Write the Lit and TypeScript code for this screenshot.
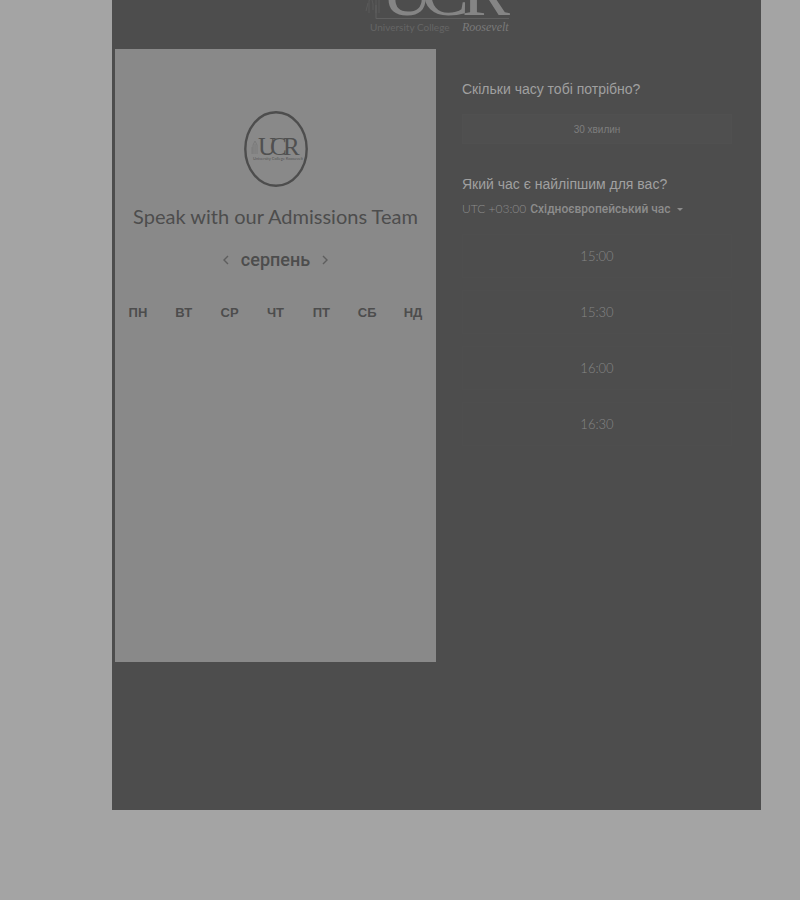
import { LitElement, html, css, svg } from "lit";
import { customElement, state } from "lit/decorators.js";

const DAYS = ["ПН", "ВТ", "СР", "ЧТ", "ПТ", "СБ", "НД"];
const TIMES = ["15:00", "15:30", "16:00", "16:30"];

const tower = svg`<path d="M5 20l2-8M8 22V10l2-5 2 8v6M15 22V0M18 22V8" />`;

@customElement("app-root")
export class AppRoot extends LitElement {
  static styles = css`
    :host {
      display: block;
      min-height: 100vh;
      box-sizing: border-box;
      padding: 0 39px 90px 112px;
      background: #a4a4a4;
      font-family: "Liberation Sans", Arial, sans-serif;
      color: #4d4d4d;
    }
    * {
      box-sizing: border-box;
    }
    button {
      font: inherit;
      color: inherit;
      background: none;
      border: 0;
      padding: 0;
      cursor: pointer;
    }
    .page {
      background: #4d4d4d;
      padding: 0 3px 148px;
    }
    .banner {
      height: 49px;
      overflow: hidden;
      display: flex;
      flex-direction: column;
      justify-content: flex-end;
      align-items: center;
      padding-bottom: 14px;
    }
    .banner svg {
      display: block;
      width: 148px;
      height: 80px;
      flex: none;
      overflow: visible;
    }
    .booking {
      display: grid;
      grid-template-columns: minmax(0, 321fr) minmax(0, 322fr);
    }
    .calendar {
      background: #898989;
      min-height: 613px;
      padding-top: 62px;
      display: flex;
      flex-direction: column;
      align-items: center;
    }
    .badge {
      display: block;
      width: 64px;
      height: 76px;
    }
    h1 {
      margin: 15px 0 0;
      font: 400 20px/28px Lato, sans-serif;
      white-space: nowrap;
    }
    .month {
      display: flex;
      align-items: center;
      gap: 8px;
      margin-top: 16px;
    }
    .month h2 {
      margin: 0;
      font: 500 18px/28px Roboto, sans-serif;
    }
    .month button {
      display: flex;
      padding: 4px;
    }
    .month svg {
      width: 6px;
      height: 10px;
      fill: none;
      stroke: #5e5e5e;
      stroke-width: 1.4;
    }
    .week {
      width: 100%;
      margin-top: 28px;
      border-collapse: collapse;
      table-layout: fixed;
    }
    th {
      padding: 0;
      font-size: 13px;
      line-height: 22px;
      font-weight: 700;
    }
    .options {
      padding: 30px 26px 0;
      color: #a0a0a0;
    }
    .options h3 {
      margin: 0;
      font-size: 14px;
      line-height: 20px;
      font-weight: 400;
    }
    .duration {
      display: block;
      width: 100%;
      height: 30px;
      margin: 15px 0 30px;
      background: #4f4f4f;
      border: 1px solid #505050;
      font-size: 10px;
      color: #7e7e7e;
    }
    .zone {
      display: flex;
      align-items: center;
      gap: 4px;
      margin: 5px 0 15px;
      font-size: 12px;
      line-height: 20px;
      white-space: nowrap;
      color: #8c8c8c;
    }
    .zone .offset {
      font-family: Lato, sans-serif;
      font-weight: 300;
    }
    .zone .name {
      font-family: Roboto, sans-serif;
      font-weight: 500;
    }
    .zone svg {
      width: 6px;
      height: 3px;
      margin-left: 2px;
      fill: #8c8c8c;
    }
    .times {
      list-style: none;
      margin: 0;
      padding: 0;
      display: grid;
      gap: 12px;
    }
    .times button {
      display: block;
      width: 100%;
      height: 44px;
      border: 1px solid #4e4e4e;
      font: 300 13px/20px Lato, sans-serif;
      color: #858585;
    }
    .serif {
      font-family: "Liberation Serif", serif;
    }
    .sans {
      font-family: Lato, sans-serif;
    }
  `;

  @state() private selected = "";

  render() {
    return html`
      <main class="page">
        <header class="banner">
          <svg viewBox="0 0 148 80" role="img" aria-label="University College Roosevelt">
            <g fill="none" stroke="#5a5a5a" transform="translate(-2 36)">${tower}</g>
            <path d="M13 50V63.500H146" fill="none" stroke="#606060" />
            <g class="serif" font-size="72" fill="#858585">
              <text x="18" y="60">U</text>
              <text x="58" y="60">C</text>
              <text x="99" y="60">R</text>
            </g>
            <text class="sans" x="7" y="76" font-size="10" fill="#656565">University College</text>
            <text class="serif" x="99" y="76" font-size="12" font-style="italic" fill="#7a7a7a">Roosevelt</text>
          </svg>
        </header>
        <div class="booking">
          <section class="calendar">
            <svg class="badge" viewBox="0 0 64 76" role="img" aria-label="UCR">
              <ellipse cx="32" cy="38" rx="30.7" ry="36.7" fill="none" stroke="#4d4d4d" stroke-width="2.4" />
              <path d="M9 43V34l2-4 2 4v9M11 43v-10M8 36v7" fill="none" stroke="#7a7a7a" />
              <g class="serif" font-size="25" fill="#505050">
                <text x="14" y="44">U</text>
                <text x="26" y="44">C</text>
                <text x="39" y="44">R</text>
              </g>
              <text class="sans" x="9" y="49" font-size="4" fill="#555">University College Roosevelt</text>
            </svg>
            <h1>Speak with our Admissions Team</h1>
            <div class="month">
              <button aria-label="Попередній місяць"><svg viewBox="0 0 6 10"><path d="M5 1L1 5l4 4" /></svg></button>
              <h2>серпень</h2>
              <button aria-label="Наступний місяць"><svg viewBox="0 0 6 10"><path d="M1 1l4 4-4 4" /></svg></button>
            </div>
            <table class="week">
              <thead><tr>${DAYS.map((d) => html`<th scope="col">${d}</th>`)}</tr></thead>
            </table>
          </section>
          <section class="options">
            <h3>Скільки часу тобі потрібно?</h3>
            <button class="duration">30 хвилин</button>
            <h3>Який час є найліпшим для вас?</h3>
            <button class="zone" aria-haspopup="listbox">
              <span class="offset">UTC +03:00</span>
              <span class="name">Східноєвропейський час</span>
              <svg viewBox="0 0 6 3"><path d="M0 0h6L3 3z" /></svg>
            </button>
            <ul class="times">
              ${TIMES.map(
                (t) => html`<li>
                  <button aria-pressed=${this.selected === t} @click=${() => (this.selected = t)}>${t}</button>
                </li>`
              )}
            </ul>
          </section>
        </div>
      </main>
    `;
  }
}
